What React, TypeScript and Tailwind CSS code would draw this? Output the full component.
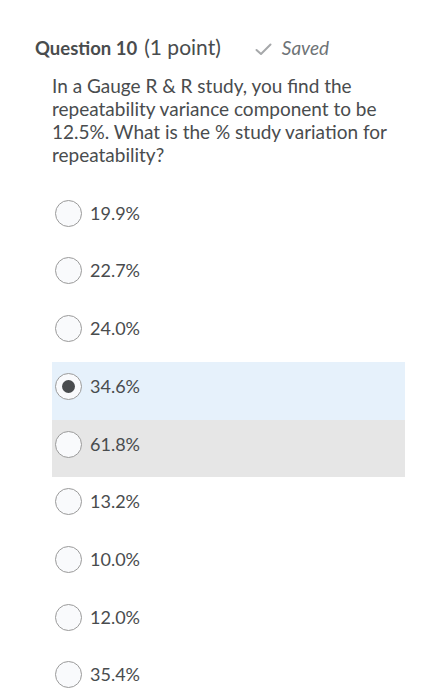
import React from "react";

const options = ["19.9%", "22.7%", "24.0%", "34.6%", "61.8%", "13.2%", "10.0%", "12.0%", "35.4%"];

function Radio({ checked }: { checked: boolean }) {
  return (
    <span className="w-[27px] h-[27px] shrink-0 rounded-full border-[1.5px] border-[#9a9a9a] bg-[#f9fafc] flex items-center justify-center">
      {checked && <span className="w-[13px] h-[13px] rounded-full bg-[#494c4e]" />}
    </span>
  );
}

export default function App() {
  const selected = 3;
  const hovered = 4;
  return (
    <div className="w-[433px] h-[700px] bg-white overflow-hidden text-[#494c4e]" style={{ fontFamily: "Lato, 'Open Sans', sans-serif" }}>
      <div className="pt-[31px] pl-[35px] flex items-baseline">
        <span className="text-[18.5px] font-bold">Question 10</span>
        <span className="text-[21px] ml-[7px]">(1 point)</span>
        <span className="ml-[34px] flex items-baseline text-[#6e7376] italic text-[19px]">
          <svg width="17" height="13" viewBox="0 0 17 13" className="mr-[10px] self-center mt-[2px]">
            <path d="M1.5 7 L6 11 L15.5 1.5" fill="none" stroke="#a6a8aa" strokeWidth="2" strokeLinecap="round" strokeLinejoin="round" />
          </svg>
          Saved
        </span>
      </div>
      <p className="mt-[11px] ml-[52px] mr-[28px] text-[19px] leading-[23px]">
        In a Gauge R &amp; R study, you find the repeatability variance component to be 12.5%. What is the % study variation for repeatability?
      </p>
      <div className="mt-[23px] ml-[52px] w-[353px]">
        {options.map((o, i) => (
          <div
            key={o}
            className={`h-[57.7px] flex items-start pt-[11px] pl-[3px] ${i === selected ? "bg-[#e6f1fb]" : i === hovered ? "bg-[#e6e6e6]" : ""}`}
          >
            <Radio checked={i === selected} />
            <span className="ml-[8px] text-[18px] leading-[27px]">{o}</span>
          </div>
        ))}
      </div>
    </div>
  );
}
